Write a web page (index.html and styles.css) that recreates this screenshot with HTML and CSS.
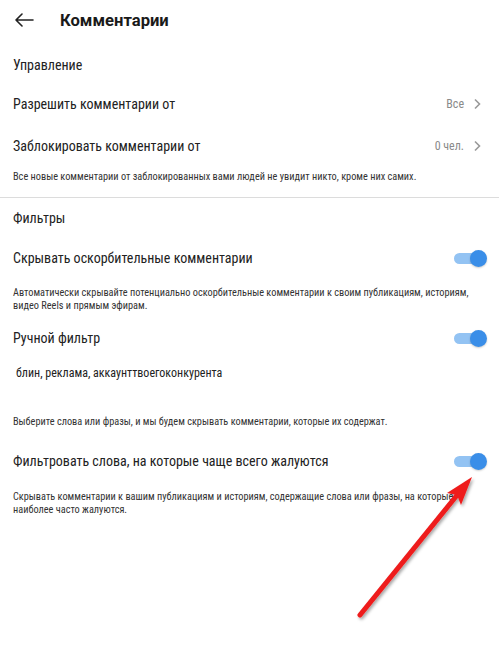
FILE: index.html
```html
<!DOCTYPE html>
<html lang="ru">
<head>
<meta charset="utf-8">
<title>Комментарии</title>
<link rel="stylesheet" href="styles.css">
</head>
<body>
<div class="page">
  <header class="header">
    <svg class="back" width="20" height="14" viewBox="0 0 20 14"><path d="M19 7H2M8 1L2 7l6 6" fill="none" stroke="#222" stroke-width="1.6" stroke-linecap="round" stroke-linejoin="round"/></svg>
    <h1 class="title">Комментарии</h1>
  </header>

  <div class="sec-title first">Управление</div>
  <div class="row"><span class="label">Разрешить комментарии от</span><span class="value">Все<svg class="chev" width="8" height="12" viewBox="0 0 8 12"><path d="M2 1.5l4.5 4.5L2 10.5" fill="none" stroke="#999" stroke-width="1.6"/></svg></span></div>
  <div class="row"><span class="label">Заблокировать комментарии от</span><span class="value">0 чел.<svg class="chev" width="8" height="12" viewBox="0 0 8 12"><path d="M2 1.5l4.5 4.5L2 10.5" fill="none" stroke="#999" stroke-width="1.6"/></svg></span></div>
  <p class="note note1">Все новые комментарии от заблокированных вами людей не увидит никто, кроме них самих.</p>

  <div class="sec-title second">Фильтры</div>
  <div class="row r-hide"><span class="label">Скрывать оскорбительные комментарии</span><span class="toggle"><span class="knob"></span></span></div>
  <p class="note note2">Автоматически скрывайте потенциально оскорбительные комментарии к своим публикациям, историям, видео Reels и прямым эфирам.</p>
  <div class="row r-manual"><span class="label">Ручной фильтр</span><span class="toggle"><span class="knob"></span></span></div>
  <div class="words">блин, реклама, аккаунттвоегоконкурента</div>
  <p class="note note3">Выберите слова или фразы, и мы будем скрывать комментарии, которые их содержат.</p>
  <div class="row r-freq"><span class="label">Фильтровать слова, на которые чаще всего жалуются</span><span class="toggle"><span class="knob"></span></span></div>
  <p class="note note4">Скрывать комментарии к вашим публикациям и историям, содержащие слова или фразы, на которые наиболее часто жалуются.</p>

  <svg class="arrow" width="499" height="648" viewBox="0 0 499 648">
    <defs>
      <filter id="sh" x="-20%" y="-20%" width="140%" height="140%">
        <feDropShadow dx="1.5" dy="2" stdDeviation="1.5" flood-color="#000" flood-opacity="0.35"/>
      </filter>
    </defs>
    <g filter="url(#sh)" fill="#ee1c1c">
      <path d="M360 615 L458 494" stroke="#ee1c1c" stroke-width="5" stroke-linecap="round"/>
      <polygon points="472,477 461,505 457,495 447,493"/>
    </g>
  </svg>
</div>
</body>
</html>
```
FILE: styles.css
```css
* { box-sizing: border-box; }
html, body { margin: 0; padding: 0; background: #fff; }
body {
  font-family: Roboto, "Noto Sans", "DejaVu Sans", sans-serif;
  font-stretch: 82%;
  color: #222;
}
.page {
  position: relative;
  width: 499px;
  height: 648px;
  overflow: hidden;
  padding-left: 13px;
}
.header {
  height: 40px;
  display: flex;
  align-items: center;
}
.back { margin-left: 1px; }
.title {
  margin: 0 0 0 26px;
  font-size: 16.6px;
  font-weight: 700;
  font-stretch: 100%;
  color: #1a1a1a;
}
.sec-title {
  font-size: 14px;
  line-height: 16px;
  color: #222;
}
.sec-title.first { padding: 17px 0 10px; }
.sec-title.second { height: 40px; display: flex; align-items: center; }
.row {
  height: 42px;
  display: flex;
  align-items: center;
  justify-content: space-between;
  padding-right: 18px;
  font-size: 14px;
}
.label { color: #222; }
.value {
  display: flex;
  align-items: center;
  gap: 9px;
  color: #8a8a8a;
  font-size: 12px;
}
.note {
  margin: 0;
  font-size: 10.3px;
  color: #333;
}
.note1 {
  line-height: 14px;
  padding-top: 3px;
  padding-bottom: 13px;
  margin-left: -13px;
  padding-left: 13px;
  border-bottom: 1px solid #dcdcdc;
}
.r-hide { height: 40px; padding-right: 13px; }
.note2 { line-height: 13px; padding-top: 8px; padding-right: 20px; }
.r-manual { height: 52px; padding-right: 13px; }
.words {
  font-size: 12px;
  line-height: 18px;
  padding-left: 3px;
}
.note3 { line-height: 14px; padding-top: 33px; }
.r-freq { margin-top: 11px; padding-right: 13px; }
.note4 { line-height: 13px; padding-top: 8px; padding-right: 20px; }
.toggle {
  position: relative;
  width: 32px;
  height: 11px;
  border-radius: 6px;
  background: #93c3f3;
}
.knob {
  position: absolute;
  right: -1px;
  top: -3px;
  width: 17px;
  height: 17px;
  border-radius: 50%;
  background: #3a8ee8;
  box-shadow: 0 1px 2px rgba(0,0,0,0.2);
}
.arrow {
  position: absolute;
  left: 0;
  top: 0;
  pointer-events: none;
}
```
